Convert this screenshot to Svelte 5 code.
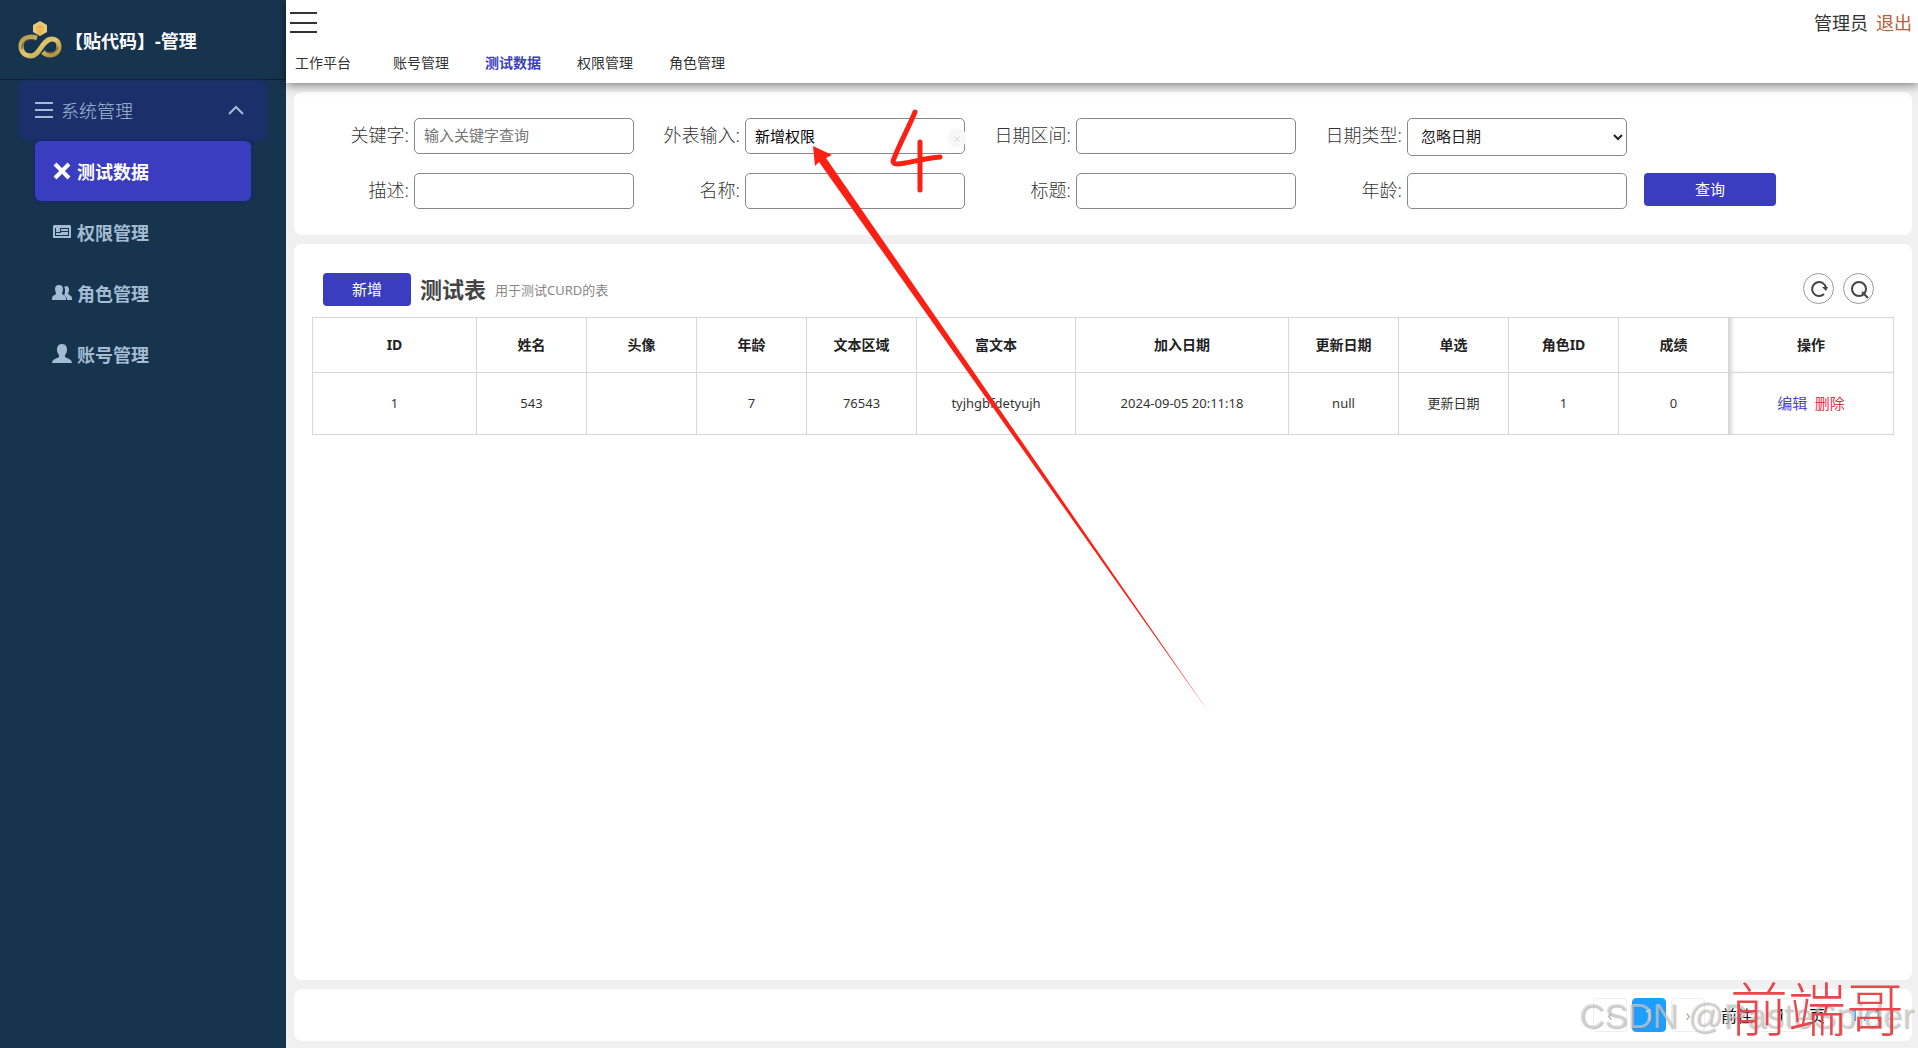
<script lang="ts">
	const menu = [
		{ name: '测试数据', icon: 'close' },
		{ name: '权限管理', icon: 'card' },
		{ name: '角色管理', icon: 'group' },
		{ name: '账号管理', icon: 'user' }
	];
	const tabs = ['工作平台', '账号管理', '测试数据', '权限管理', '角色管理'];

	const columns = [
		{ title: 'ID', width: 164 },
		{ title: '姓名', width: 110 },
		{ title: '头像', width: 110 },
		{ title: '年龄', width: 110 },
		{ title: '文本区域', width: 110 },
		{ title: '富文本', width: 159 },
		{ title: '加入日期', width: 213 },
		{ title: '更新日期', width: 110 },
		{ title: '单选', width: 110 },
		{ title: '角色ID', width: 110 },
		{ title: '成绩', width: 110 },
		{ title: '操作', width: 165 }
	];
	const total = columns.reduce((sum, c) => sum + c.width, 0);
	const rows = [
		['1', '543', '', '7', '76543', 'tyjhgbfdetyujh', '2024-09-05 20:11:18', 'null', '更新日期', '1', '0']
	];

	let current = $state('测试数据');
	let opened = $state(true);
	let query = $state({
		keyword: '',
		outer: '新增权限',
		range: '',
		dateType: '忽略日期',
		desc: '',
		name: '',
		title: '',
		age: ''
	});
</script>

<div class="layout">
	<aside class="sidebar">
		<div class="brand">
			<svg class="logo" viewBox="0 0 46 40">
				<defs>
					<linearGradient id="gold" x1="0" y1="0" x2="1" y2="1">
						<stop offset="0" stop-color="#b39a4c" />
						<stop offset="0.5" stop-color="#e0c66c" />
						<stop offset="1" stop-color="#a98a3c" />
					</linearGradient>
				</defs>
				<path d="M23 1 30 5v7l-7 4-7-4V5z" fill="#e3cd80" />
				<path d="M23 4 27 7l-1 6-3 2-3-2-1-6z" fill="#f0b850" />
				<path
					d="M20 18C11 15 4 19 4 26c0 6 4 10 10 10 9 0 11-17 21-17 4 0 7 3 7 7 0 6-4 9-9 9-3 0-5-1-7-3"
					fill="none"
					stroke="url(#gold)"
					stroke-width="5"
				/>
				<path d="M5 29c-1-7 5-11 13-9M28 31c5 4 11 2 13-4" fill="none" stroke="#5d4d2d" stroke-width="1" />
			</svg>
			<span>【贴代码】-管理</span>
		</div>

		<nav>
			<button class="group" onclick={() => (opened = !opened)}>
				<svg width="18" height="16" viewBox="0 0 18 16" stroke="currentColor" stroke-width="2">
					<path d="M0 1h18M0 8h18M0 15h18" />
				</svg>
				<span>系统管理</span>
				<svg class="arrow" width="16" height="10" viewBox="0 0 16 10" fill="none" stroke="currentColor" stroke-width="2">
					<path d="M1 9l7-7 7 7" />
				</svg>
			</button>
			{#if opened}
				{#each menu as item (item.name)}
					<button class="item" class:active={current === item.name} onclick={() => (current = item.name)}>
						<svg width="20" height="20" viewBox="0 0 20 20" fill="currentColor">
							{#if item.icon === 'close'}
								<path d="M3 3l14 14M17 3L3 17" stroke="currentColor" stroke-width="4" />
							{:else if item.icon === 'card'}
								<path
									fill-rule="evenodd"
									d="M2 3h16l1 1v12H1V4zM3 6v8h14V6zM4 6h4v4H4zM9 7h7v2H9zM9 10h7v1H9zM4 11h12v2H4z"
								/>
							{:else if item.icon === 'group'}
								<path
									d="M14 3c2 0 3 1 3 4 0 2-1 3-1 4l3 2c1 1 1 2 1 4h-5c0-3-2-4-3-5 1-1 1-3 1-5 0-1 0-2-1-3z"
								/>
								<path
									d="M7 2c3 0 4 2 4 4s-1 3-1 5l3 2c1 1 1 2 1 4H0c0-2 0-3 1-4l3-2c0-2-1-3-1-5s1-4 4-4z"
								/>
							{:else}
								<path
									d="M10 0c4 0 5 3 5 6 0 2-1 4-2 5v2c1 1 7 2 7 6H0c0-4 6-5 7-6v-2C6 10 5 8 5 6c0-3 1-6 5-6z"
								/>
							{/if}
						</svg>
						<span>{item.name}</span>
					</button>
				{/each}
			{/if}
		</nav>
	</aside>

	<div class="main">
		<header>
			<div class="topbar">
				<button class="toggle" aria-label="菜单">
					<svg width="27" height="22" viewBox="0 0 27 22" stroke="#333" stroke-width="2">
						<path d="M0 2h27M0 12h27M0 21h27" />
					</svg>
				</button>
				<div class="account">
					<span>管理员</span>
					<a href="#logout">退出</a>
				</div>
			</div>
			<div class="tabs">
				{#each tabs as tab (tab)}
					<button class:active={current === tab} onclick={() => (current = tab)}>{tab}</button>
				{/each}
			</div>
		</header>

		<main>
			<form class="card search" onsubmit={(e) => e.preventDefault()}>
				<div class="field">
					<label for="keyword">关键字:</label>
					<input id="keyword" placeholder="输入关键字查询" bind:value={query.keyword} />
				</div>
				<div class="field clearable">
					<label for="outer">外表输入:</label>
					<input id="outer" bind:value={query.outer} />
					<button type="button" class="clear" aria-label="清空" onclick={() => (query.outer = '')}>
						<svg width="8" height="8" viewBox="0 0 8 8" stroke="#ddd"><path d="M1 1l6 6M7 1L1 7" /></svg>
					</button>
				</div>
				<div class="field">
					<label for="range">日期区间:</label>
					<input id="range" bind:value={query.range} />
				</div>
				<div class="field">
					<label for="dateType">日期类型:</label>
					<select id="dateType" bind:value={query.dateType}>
						<option>忽略日期</option>
						<option>加入日期</option>
						<option>更新日期</option>
					</select>
				</div>
				<div class="field">
					<label for="desc">描述:</label>
					<input id="desc" bind:value={query.desc} />
				</div>
				<div class="field">
					<label for="name">名称:</label>
					<input id="name" bind:value={query.name} />
				</div>
				<div class="field">
					<label for="title">标题:</label>
					<input id="title" bind:value={query.title} />
				</div>
				<div class="field">
					<label for="age">年龄:</label>
					<input id="age" bind:value={query.age} />
				</div>
				<button class="btn submit">查询</button>
			</form>

			<section class="card list">
				<div class="list-head">
					<button class="btn add">新增</button>
					<h1>测试表</h1>
					<small>用于测试CURD的表</small>
					<div class="tools">
						<button aria-label="刷新">
							<svg width="20" height="20" viewBox="0 0 20 20" fill="none" stroke="#444" stroke-width="2">
								<path d="M15 15a7 7 0 1 1 2-6" />
								<path d="M13 8h6l-2 4z" fill="#444" stroke="none" />
							</svg>
						</button>
						<button aria-label="搜索">
							<svg width="20" height="20" viewBox="0 0 20 20" fill="none" stroke="#444" stroke-width="2">
								<circle cx="10" cy="10" r="7" />
								<path d="M13 13l6 6" />
							</svg>
						</button>
					</div>
				</div>

				<table>
					<colgroup>
						{#each columns as col (col.title)}
							<col style="width: {(col.width / total) * 100}%" />
						{/each}
					</colgroup>
					<thead>
						<tr>
							{#each columns as col (col.title)}
								<th>{col.title}</th>
							{/each}
						</tr>
					</thead>
					<tbody>
						{#each rows as row (row[0])}
							<tr>
								{#each row as cell}
									<td>{cell}</td>
								{/each}
								<td class="ops">
									<a href="#edit">编辑</a>
									<a href="#delete" class="danger">删除</a>
								</td>
							</tr>
						{/each}
					</tbody>
				</table>
			</section>

			<footer class="card pager">
				<button aria-label="上一页">‹</button>
				<button class="on">1</button>
				<button aria-label="下一页">›</button>
				<label for="page">前往</label>
				<input id="page" value="1" />
				<span>页</span>
				<span class="count"><b>1</b> <b>/</b> 1</span>
			</footer>
		</main>
	</div>

	<!-- hand-drawn marks over the page -->
	<svg class="marks" width="420" height="620" viewBox="800 100 420 620">
		<path d="M813 146l19 9-6 3L1210 714 819 162l-4 4z" fill="#fb2014" />
		<path
			d="M915 112C907 131 899 145 893 161c0 4 6 3 12 2 12-2 22-5 35-6M920 142v48"
			fill="none"
			stroke="#fb2014"
			stroke-width="5"
			stroke-linecap="round"
			stroke-linejoin="round"
		/>
	</svg>

	<div class="watermark">CSDN @PasteSpider</div>
	<div class="signature">前端哥</div>
</div>

<style>
	:global(body) {
		background: #f0f0f0;
	}

	.layout {
		position: relative;
		display: flex;
		min-height: 100vh;
		overflow: hidden;
		font-family: 'Noto Sans', 'Noto Sans CJK SC', sans-serif;
		font-size: 14px;
		color: #333;
	}

	button,
	input,
	select {
		box-sizing: border-box;
		font-family: inherit;
	}
	button {
		padding: 0;
		border: none;
		background: none;
		color: inherit;
		cursor: pointer;
	}
	a {
		text-decoration: none;
	}

	/* Sidebar */
	.sidebar {
		flex: none;
		width: 286px;
		background: #17344f;
		color: #a3bcd3;
	}
	.brand {
		box-sizing: border-box;
		display: flex;
		align-items: center;
		gap: 2px;
		height: 80px;
		padding-left: 17px;
		border-bottom: 1px solid #0d2136;
		font-size: 18px;
		font-weight: bold;
		color: #fff;
	}
	.logo {
		width: 46px;
		height: 40px;
	}
	nav {
		display: flex;
		flex-direction: column;
		gap: 1px;
		padding: 1px 19px;
	}
	.group {
		display: flex;
		align-items: center;
		gap: 8px;
		height: 59px;
		padding: 0 23px 2px 16px;
		border-radius: 8px;
		background: #1b306b;
		box-shadow: 0 0 4px #1b306b;
		font-size: 18px;
		font-weight: 300;
	}
	.arrow {
		margin-left: auto;
	}
	.item {
		display: flex;
		align-items: center;
		gap: 5px;
		height: 60px;
		margin: 0 16px;
		padding-left: 17px;
		border-radius: 6px;
		font-size: 18px;
		font-weight: bold;
	}
	.item.active {
		background: #3b3dc0;
		box-shadow: 0 0 4px #1a1f7a;
		color: #fff;
	}

	/* Header */
	.main {
		flex: 1;
		display: flex;
		flex-direction: column;
		min-width: 0;
	}
	header {
		position: relative;
		z-index: 1;
		background: #fff;
		box-shadow: 0 2px 10px rgba(0, 0, 0, 0.5);
	}
	.topbar {
		display: flex;
		justify-content: space-between;
		align-items: center;
		height: 43px;
		padding: 0 6px 0 4px;
	}
	.toggle svg {
		display: block;
	}
	.account {
		display: flex;
		gap: 8px;
		font-size: 18px;
	}
	.account a {
		color: #b5623a;
	}
	.tabs {
		display: flex;
		gap: 36px;
		height: 38px;
		padding: 0 0 2px 9px;
	}
	.tabs button {
		font-size: 14px;
	}
	.tabs button:first-child {
		margin-right: 6px;
	}
	.tabs .active {
		font-weight: bold;
		color: #3b3dc0;
	}

	main {
		flex: 1;
		display: flex;
		flex-direction: column;
		gap: 9px;
		padding: 9px 6px 7px 8px;
	}
	.card {
		border-radius: 8px;
		background: #fff;
	}

	/* Search form */
	.search {
		display: flex;
		flex-wrap: wrap;
		align-items: flex-start;
		row-gap: 17px;
		padding: 26px 9px;
	}
	.field {
		position: relative;
		display: flex;
		gap: 5px;
	}
	.field label {
		width: 106px;
		line-height: 34px;
		text-align: right;
		font-size: 18px;
		font-weight: 300;
		color: #333;
	}
	.field input,
	.field select {
		width: 220px;
		height: 36px;
		padding: 0 9px 2px;
		border: 1px solid #888;
		border-radius: 5px;
		background: #fff;
		font-size: 15px;
		color: #000;
	}
	.field select {
		height: 38px;
		color: #222;
	}
	.field input::placeholder {
		color: #757575;
	}
	.clear {
		position: absolute;
		top: 10px;
		right: -2px;
		width: 20px;
		height: 20px;
		border-radius: 50%;
		background: #f8f8f8;
	}
	.btn {
		height: 33px;
		padding-bottom: 2px;
		border-radius: 4px;
		background: #3b3dc0;
		font-size: 15px;
		color: #fff;
	}
	.submit {
		width: 132px;
		margin-left: 17px;
	}

	/* Table card */
	.list {
		flex: 1;
		padding: 29px 18px;
	}
	.list-head {
		display: flex;
		align-items: center;
		height: 33px;
		margin-bottom: 11px;
		padding: 0 20px 0 11px;
	}
	.add {
		width: 88px;
	}
	h1 {
		margin: 0 9px;
		padding-bottom: 4px;
		font-size: 22px;
		color: #444;
	}
	small {
		font-size: 13px;
		color: #888;
	}
	.tools {
		display: flex;
		gap: 9px;
		margin-left: auto;
		padding-bottom: 2px;
	}
	.tools button {
		display: flex;
		align-items: center;
		justify-content: center;
		width: 31px;
		height: 31px;
		border: 1px solid #999;
		border-radius: 50%;
	}
	table {
		width: 100%;
		table-layout: fixed;
		border-collapse: collapse;
	}
	th,
	td {
		padding: 0 0 2px;
		border: 1px solid #d4d7d7;
		text-align: center;
	}
	th {
		height: 52px;
		font-size: 14px;
		color: #222;
	}
	td {
		height: 59px;
		font-size: 13px;
	}
	th:last-child,
	td:last-child {
		box-shadow: inset 5px 0 5px -3px #ccc;
	}
	.ops a {
		margin: 0 2px;
		font-size: 15px;
		color: #4a40d0;
	}
	.ops .danger {
		color: #d0384a;
	}

	/* Pagination */
	.pager {
		display: flex;
		justify-content: flex-end;
		align-items: center;
		gap: 5px;
		height: 52px;
		padding-right: 20px;
		font-size: 16px;
		color: #111;
	}
	.pager button {
		width: 34px;
		height: 34px;
		border: 1px solid #eee;
		border-radius: 4px;
		font-size: 16px;
		color: #aaa;
	}
	.pager .on {
		border-color: #1e9fff;
		background: #1e9fff;
		color: #fff;
	}
	.pager label {
		margin-left: 11px;
	}
	.pager input {
		width: 46px;
		height: 34px;
		border: 1px solid #eee;
		border-radius: 4px;
		text-align: center;
		font-size: 16px;
	}
	.count {
		margin-left: 20px;
		word-spacing: 0;
		white-space: pre;
		min-width: 42px;
	}
	.count b {
		font-weight: normal;
		color: #1e9fff;
	}

	/* Overlays */
	.marks {
		position: absolute;
		top: 100px;
		left: 800px;
		z-index: 2;
		pointer-events: none;
	}
	.watermark,
	.signature {
		position: absolute;
		z-index: 2;
		white-space: nowrap;
		pointer-events: none;
	}
	.watermark {
		right: 4px;
		bottom: 12px;
		font-family: 'Liberation Sans', sans-serif;
		font-size: 35px;
		line-height: 40px;
		color: rgba(215, 215, 215, 0.6);
		text-shadow: 1px 1px 1px rgba(120, 120, 120, 0.45);
	}
	.signature {
		right: 14px;
		bottom: 4px;
		font-family: 'Liberation Serif', 'Noto Sans CJK SC', serif;
		font-size: 58px;
		font-weight: 300;
		line-height: 64px;
		color: #e8484c;
	}
</style>
